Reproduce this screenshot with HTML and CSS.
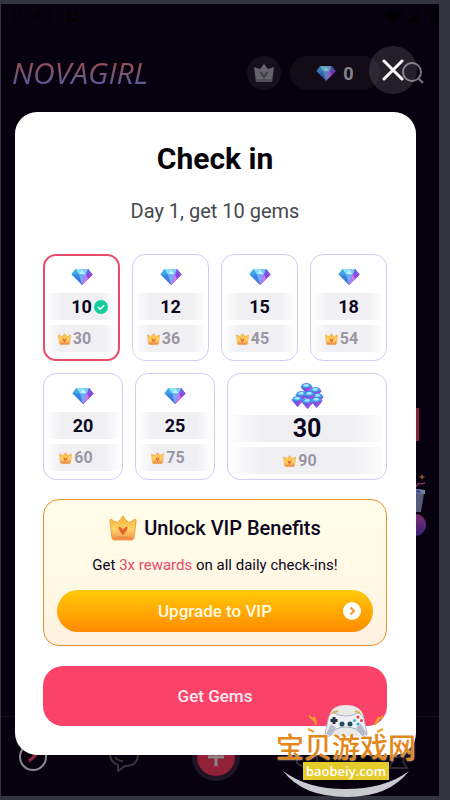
FILE: index.html
```
<!DOCTYPE html>
<html lang="en">
<head>
    <meta charset="UTF-8">
    <meta name="viewport" content="width=device-width, initial-scale=1.0">
    <title>Check in - Novagirl</title>
    <link rel="stylesheet" href="styles.css">
</head>
<body>
    <!-- shared icons -->
    <svg class="sprite" aria-hidden="true">
        <defs>
            <linearGradient id="gem-left" x1="0" y1="0" x2="1" y2="1">
                <stop offset="0" stop-color="#2fa5e8"/>
                <stop offset="1" stop-color="#4b4fd8"/>
            </linearGradient>
            <linearGradient id="gem-right" x1="0" y1="0" x2="1" y2="1">
                <stop offset="0" stop-color="#7fb6ff"/>
                <stop offset="1" stop-color="#8a1fd0"/>
            </linearGradient>
            <linearGradient id="crown-fill" x1="0" y1="0" x2="0" y2="1">
                <stop offset="0" stop-color="#fbb03c"/>
                <stop offset="0.55" stop-color="#fdd566"/>
                <stop offset="1" stop-color="#f09048"/>
            </linearGradient>
        </defs>
        <symbol id="gem" viewBox="0 0 22 17">
            <path d="M4.500 1 H17 L21.500 6.500 L11 17 L0.500 6.500 Z" fill="url(#gem-left)"/>
            <path d="M11 1 H17 L21.500 6.500 L11 17 Z" fill="url(#gem-right)"/>
            <path d="M4.500 1 L8 6.500 H0.500 Z" fill="#3ea9e2"/>
            <path d="M4.500 1 H11 L8 6.500 Z" fill="#86e3fa"/>
            <path d="M11 1 L8 6.500 H15 Z" fill="#b5f3ff"/>
            <path d="M11 1 H17 L15 6.500 Z" fill="#7ccaf5"/>
            <path d="M17 1 L21.500 6.500 H15 Z" fill="#765ade"/>
            <path d="M8 6.500 H15 L11 17 Z" fill="#76a9f5"/>
            <path d="M15 6.500 H21.500 L11 17 Z" fill="#9a3fe0"/>
            <path d="M15 6.500 L17 11 L11 17 Z" fill="#cb7cf2"/>
        </symbol>
        <symbol id="pile-gem" viewBox="0 0 13 11">
            <path d="M0.500 4 L3 1 Q6.500 -0.500 10 1 L12.500 4 L6.500 11 Z" fill="#6a5be0"/>
            <path d="M0.500 4 L3 1 Q6.500 -0.500 10 1 L12.500 4 Q6.500 6 0.500 4 Z" fill="#3f9fec"/>
            <path d="M3 3 L5 1 H8 L9 3 Q6 4.500 3 3 Z" fill="#a4e8ff"/>
            <path d="M7 5 L12.500 4 L6.500 11 Z" fill="#a548de"/>
        </symbol>
        <symbol id="crown" viewBox="0 0 28 26">
            <path d="M2 4 Q5 7 8.500 7.500 Q11.500 5 14 1 Q16.500 5 19.500 7.500 Q23 7 26 4 Q27.500 4 27 6.500 L25 23 Q24.800 25 22.500 25 H5.500 Q3.200 25 3 23 L1 6.500 Q0.500 4 2 4 Z" fill="url(#crown-fill)" stroke="#f2a241" stroke-width="1"/>
            <path d="M4 22 Q14 20.500 24 22 L23.500 24.500 H4.500 Z" fill="#ef8649" opacity="0.7"/>
            <path d="M9.500 12 Q12 11 14 15 Q16 11 18.500 12 Q19 15 14 20 Q9 15 9.500 12 Z" fill="#e9602c"/>
        </symbol>
    </svg>

    <div class="phone">
        <div class="status-bar">
            <span class="clock">10:43</span>
            <span class="status-app">A</span>
            <svg class="status-icons" viewBox="0 0 58 16" aria-hidden="true">
                <path d="M1 5 Q10 -3 20 5 L10.500 15 Z"/>
                <path d="M37 1 V15 H24 Z"/>
                <path d="M48 2 H50 V0 H54 V2 H56 V15 H48 Z"/>
            </svg>
        </div>

        <header class="header">
            <div class="logo">NOVAGIRL</div>
            <button class="vip-badge" aria-label="VIP">
                <svg viewBox="0 0 22 20" width="22" height="20">
                    <path d="M1 4 L7 6 L11 1 L15 6 L21 4 L19 19 H3 Z" fill="#65646a"/>
                    <path d="M3 16 H19 L18.500 19 H3.500 Z" fill="#504f55"/>
                    <path d="M7.500 9 L11 14 L14.500 9" fill="none" stroke="#3c3a42" stroke-width="2"/>
                </svg>
            </button>
            <div class="balance">
                <svg width="20" height="16"><use href="#gem"/></svg>
                <span>0</span>
            </div>
            <button class="search" aria-label="Search">
                <svg viewBox="0 0 22 22" width="22" height="22" fill="none" stroke="#77757d" stroke-width="2">
                    <circle cx="10" cy="10" r="9"/>
                    <path d="M16 16 L21 21"/>
                </svg>
            </button>
            <button class="close" aria-label="Close">
                <svg viewBox="0 0 22 22" width="22" height="22" fill="none" stroke="#fff" stroke-width="3" stroke-linecap="round">
                    <path d="M2 2 L20 20 M20 2 L2 20"/>
                </svg>
            </button>
        </header>

        <!-- what shows of the feed beside the dialog -->
        <div class="feed-tag"></div>
        <svg class="feed-gift" viewBox="0 0 16 66" aria-hidden="true">
            <defs>
                <linearGradient id="ball" x1="0" y1="0" x2="0" y2="1">
                    <stop offset="0" stop-color="#7c2f72"/>
                    <stop offset="1" stop-color="#38217a"/>
                </linearGradient>
            </defs>
            <circle cx="5" cy="52" r="11" fill="url(#ball)"/>
            <path d="M0 19 L14 20 L11 39 H0 Z" fill="#555a78"/>
            <path d="M0 15 L15 17 V21 L0 20 Z" fill="#767d99"/>
            <path d="M5 19 Q9 15 11 20 Z" fill="#263f91"/>
            <path d="M6 14 Q8 9 11 11 L15 10" fill="none" stroke="#7b3559" stroke-width="1.500"/>
            <path d="M12 1 L13 3 L15 4 L13 5 L12 7 L11 5 L9 4 L11 3 Z" fill="#8b562f"/>
        </svg>

        <main class="dialog">
            <h1>Check in</h1>
            <p class="subtitle">Day 1, get 10 gems</p>

            <div class="days">
                <div class="day selected">
                    <svg class="gem"><use href="#gem"/></svg>
                    <div class="amount">10
                        <svg class="tick" viewBox="0 0 14 14">
                            <circle cx="7" cy="7" r="7" fill="#14ce9b"/>
                            <path d="M4 7 L6.200 9.200 L10.200 5.200" fill="none" stroke="#fff" stroke-width="1.500"/>
                        </svg>
                    </div>
                    <div class="vip-amount"><svg class="crown"><use href="#crown"/></svg>30</div>
                </div>
                <div class="day">
                    <svg class="gem"><use href="#gem"/></svg>
                    <div class="amount">12</div>
                    <div class="vip-amount"><svg class="crown"><use href="#crown"/></svg>36</div>
                </div>
                <div class="day">
                    <svg class="gem"><use href="#gem"/></svg>
                    <div class="amount">15</div>
                    <div class="vip-amount"><svg class="crown"><use href="#crown"/></svg>45</div>
                </div>
                <div class="day">
                    <svg class="gem"><use href="#gem"/></svg>
                    <div class="amount">18</div>
                    <div class="vip-amount"><svg class="crown"><use href="#crown"/></svg>54</div>
                </div>
            </div>

            <div class="days last-days">
                <div class="day">
                    <svg class="gem"><use href="#gem"/></svg>
                    <div class="amount">20</div>
                    <div class="vip-amount"><svg class="crown"><use href="#crown"/></svg>60</div>
                </div>
                <div class="day">
                    <svg class="gem"><use href="#gem"/></svg>
                    <div class="amount">25</div>
                    <div class="vip-amount"><svg class="crown"><use href="#crown"/></svg>75</div>
                </div>
                <div class="day big">
                    <svg class="gem-pile" viewBox="0 0 33 26">
                        <use href="#pile-gem" x="9" y="0" width="13" height="11"/>
                        <use href="#pile-gem" x="18" y="4" width="13" height="11"/>
                        <use href="#pile-gem" x="4" y="8" width="13" height="11"/>
                        <use href="#pile-gem" x="20" y="10" width="13" height="11"/>
                        <use href="#pile-gem" x="12" y="8" width="13" height="11"/>
                        <use href="#pile-gem" x="0" y="13" width="13" height="11"/>
                        <use href="#pile-gem" x="19" y="14" width="13" height="11"/>
                        <use href="#pile-gem" x="10" y="15" width="13" height="11"/>
                    </svg>
                    <div class="amount">30</div>
                    <div class="vip-amount"><svg class="crown"><use href="#crown"/></svg>90</div>
                </div>
            </div>

            <section class="vip">
                <h2><svg width="28" height="26"><use href="#crown"/></svg>Unlock VIP Benefits</h2>
                <p>Get <span>3x rewards</span> on all daily check-ins!</p>
                <button class="upgrade">Upgrade to VIP
                    <svg class="arrow" viewBox="0 0 18 18">
                        <circle cx="9" cy="9" r="9" fill="#fff"/>
                        <path d="M7.500 5.500 L11 9 L7.500 12.500" fill="none" stroke="#f39a2a" stroke-width="2"/>
                    </svg>
                </button>
            </section>

            <button class="get-gems">Get Gems</button>
        </main>

        <nav class="tabs">
            <a href="#" aria-label="Discover">
                <svg viewBox="0 0 28 28" width="28" height="28" fill="none">
                    <circle cx="14" cy="14" r="13" stroke="#8a888f" stroke-width="2"/>
                    <path d="M10 18 L17 12" stroke="#8f2740" stroke-width="3"/>
                </svg>
            </a>
            <a href="#" aria-label="Chats">
                <svg viewBox="0 0 30 30" width="30" height="30" fill="none" stroke="#37343d" stroke-width="2">
                    <path d="M1 12 Q1 3 15 3 Q29 3 29 12 Q29 24 16 24 L9 29 V23 Q1 20 1 12 Z"/>
                    <path d="M6 15 Q9 19 14 19"/>
                </svg>
            </a>
            <a href="#" aria-label="Create">
                <svg viewBox="0 0 48 48" width="48" height="48">
                    <circle cx="24" cy="24" r="24" fill="#211426"/>
                    <circle cx="24" cy="24" r="19" fill="#8f2138"/>
                    <path d="M24 15 V33 M16 24 H32" stroke="#8d8087" stroke-width="3"/>
                </svg>
            </a>
            <a href="#" aria-label="Gallery">
                <svg viewBox="0 0 28 28" width="28" height="28" fill="none" stroke="#2c2932" stroke-width="2">
                    <path d="M4 4 H24 V20 L14 27 L4 20 Z"/>
                </svg>
            </a>
            <a href="#" aria-label="Profile">
                <svg viewBox="0 0 28 28" width="28" height="28" fill="none" stroke="#2c2932" stroke-width="2">
                    <circle cx="14" cy="8" r="6"/>
                    <path d="M8 14 L9 18 L5 25 H23 L19 18 L20 14"/>
                </svg>
            </a>
        </nav>
    </div>

    <div class="site-mark" lang="zh">
        <svg class="pad" viewBox="0 0 76 38" aria-hidden="true">
            <path d="M21 12 Q23 0 38 0 Q53 0 56 12 L58 31 H19 Z" fill="#e9e9e9"/>
            <path d="M26 8 Q21 8 20 15 L17 29 Q18 34 23 30 L28 24 Q38 20 48 24 L54 30 Q59 34 59 28 L56 14 Q54 8 49 8 Q45 11 38 11 Q31 11 26 8 Z" fill="#eef0f4" stroke="#aeb1bf" stroke-width="1"/>
            <path d="M18 29 L23 19 L28 23 L22 31 Z M53 19 L59 29 L55 31 L48 23 Z" fill="#b6bbca"/>
            <path d="M24 8 L30 6 M47 6 L52 8" stroke="#e5b34a" stroke-width="2"/>
            <path d="M26 12 V19 M22.500 15.500 H29.500" stroke="#243345" stroke-width="3"/>
            <circle cx="34" cy="19" r="2.500" fill="#244e5c"/>
            <circle cx="42" cy="19" r="2.500" fill="#244e5c"/>
            <circle cx="50" cy="12" r="1.500" fill="#e04848"/>
            <circle cx="50" cy="19" r="1.500" fill="#3aa0dd"/>
            <circle cx="46.500" cy="15.500" r="1.500" fill="#48acd8"/>
            <circle cx="53.500" cy="15.500" r="1.500" fill="#e04848"/>
            <path d="M1 11 L8 17 L6 12 L8 20 M0 24 L6 27 M75 11 L68 17 L71 12 L67 20 M75 24 L69 27" fill="none" stroke="#eda22c" stroke-width="2"/>
        </svg>
        <div class="mark-name">宝贝游戏网</div>
        <div class="mark-url">baobeiy.com</div>
        <svg class="swoosh" viewBox="0 0 126 26" aria-hidden="true">
            <path d="M0 0 Q24 18 62 18 Q102 18 126 0 Q106 26 64 26 Q20 26 0 0 Z" fill="#c9c9d1"/>
        </svg>
    </div>
</body>
</html>
```

FILE: styles.css
```
* {
    box-sizing: border-box;
}
body {
    margin: 0;
    padding: 4px 11px 4px 1px;
    background-color: #32353f;
    font-family: Roboto, sans-serif;
    color: #0c0620;
}
h1, h2, p {
    margin: 0;
}
button {
    border: none;
    padding: 0;
    font-family: inherit;
    cursor: pointer;
}
svg {
    display: block;
    flex-shrink: 0;
}
.sprite {
    position: absolute;
    width: 0;
    height: 0;
}
.phone {
    position: relative;
    min-height: calc(100vh - 8px);
    background-color: #07000f;
    overflow: hidden;
}

/* top of the app */
.status-bar {
    display: flex;
    align-items: center;
    height: 24px;
    padding: 0 6px 0 8px;
    color: #010003;
    font-size: 17px;
}
.status-app {
    margin-left: 16px;
    width: 12px;
    font-size: 10px;
    line-height: 12px;
    text-align: center;
    background-color: #010003;
    color: #0b0613;
}
.status-icons {
    width: 58px;
    height: 16px;
    margin-left: auto;
    margin-right: -8px;
    fill: #010003;
}
.header {
    position: relative;
    display: flex;
    align-items: center;
    height: 72px;
    margin-bottom: 12px;
    padding: 18px 15px 0 11px;
}
.logo {
    margin-right: auto;
    font-family: "Open Sans", sans-serif;
    font-style: italic;
    font-size: 30px;
    line-height: 40px;
    background: linear-gradient(#94505a 30%, #5c5c94 75%);
    background-clip: text;
    -webkit-background-clip: text;
    color: transparent;
}
.vip-badge {
    display: flex;
    align-items: center;
    justify-content: center;
    width: 34px;
    height: 34px;
    border-radius: 50%;
    background-color: #15101c;
}
.balance {
    display: flex;
    align-items: center;
    justify-content: center;
    gap: 7px;
    width: 90px;
    height: 34px;
    margin-left: 9px;
    border-radius: 17px;
    background-color: #110c18;
    color: #85838a;
    font-size: 18px;
    font-weight: 700;
}
.balance svg {
    opacity: 0.75;
}
.search {
    margin-left: 22px;
    background: none;
}
.close {
    position: absolute;
    right: 22px;
    top: 18px;
    display: flex;
    align-items: center;
    justify-content: center;
    width: 48px;
    height: 48px;
    border-radius: 50%;
    background-color: rgba(255, 255, 255, 0.12);
}
.feed-tag {
    position: absolute;
    right: 20px;
    top: 404px;
    width: 12px;
    height: 33px;
    background-color: #84213a;
}
.feed-gift {
    position: absolute;
    right: 13px;
    top: 469px;
    width: 16px;
    height: 66px;
}

/* dialog */
.dialog {
    position: relative;
    z-index: 1;
    margin: 0 23px 41px 14px;
    padding: 30px 29px 29px 28px;
    border-radius: 22px;
    background-color: #fff;
    text-align: center;
}
h1 {
    font-size: 30px;
    line-height: 34px;
    font-weight: 700;
    color: #050308;
}
.subtitle {
    margin: 20px 0 28px;
    font-size: 20px;
    line-height: 30px;
    color: #47494f;
}
.days {
    display: grid;
    grid-template-columns: repeat(4, 1fr);
    gap: 12px;
}
.last-days {
    grid-template-columns: 1fr 1fr 2fr;
    margin-top: 12px;
}
.day {
    display: flex;
    flex-direction: column;
    align-items: center;
    justify-content: flex-end;
    gap: 5px;
    height: 107px;
    padding: 0 4px 8px;
    border: 1px solid #cfcdf7;
    border-radius: 13px;
}
.day.selected {
    padding: 0 3px 7px;
    border: 2px solid #e94a6c;
}
.day.big {
    padding-bottom: 5px;
}
.gem {
    width: 22px;
    height: 17px;
    margin-bottom: 3px;
}
.gem-pile {
    width: 33px;
    height: 26px;
    margin-bottom: 1px;
}
.amount,
.vip-amount {
    display: flex;
    align-items: center;
    justify-content: center;
    width: 100%;
    height: 27px;
    background: linear-gradient(90deg, #fcfcfd, #f0f0f3 20%, #f0f0f3 80%, #fcfcfd);
    font-size: 18px;
    font-weight: 700;
}
.amount {
    position: relative;
}
.big .amount {
    font-size: 25px;
}
.tick {
    position: absolute;
    right: 7px;
    width: 14px;
    height: 14px;
}
.vip-amount {
    gap: 2px;
    padding-right: 14px;
    font-size: 16px;
    color: #9b96a5;
}
.crown {
    width: 13px;
    height: 12px;
}
.vip {
    margin-top: 19px;
    padding: 14px 13px 13px;
    border: 1px solid #e8922f;
    border-radius: 16px;
    background: linear-gradient(#fffde9, #fff8e4 60%, #fff1e0);
}
h2 {
    display: flex;
    align-items: center;
    justify-content: center;
    gap: 7px;
    font-size: 20px;
    line-height: 28px;
    font-weight: 500;
}
.vip p {
    margin: 13px 0 15px;
    font-size: 15px;
    line-height: 20px;
}
.vip p span {
    color: #e94a6c;
}
.upgrade {
    position: relative;
    display: block;
    width: 100%;
    height: 42px;
    border-radius: 21px;
    background: linear-gradient(#ffca08, #ff8a00);
    color: #fffbe0;
    font-size: 17px;
    font-weight: 500;
}
.arrow {
    position: absolute;
    right: 12px;
    top: 12px;
    width: 18px;
    height: 18px;
}
.get-gems {
    display: block;
    width: 100%;
    height: 60px;
    margin-top: 20px;
    border-radius: 20px;
    background-color: #fb4269;
    color: #ffe9ef;
    font-size: 17px;
    font-weight: 500;
}

/* bottom tabs */
.tabs {
    position: absolute;
    left: 0;
    right: 0;
    bottom: 0;
    display: flex;
    align-items: center;
    justify-content: space-between;
    height: 80px;
    padding: 0 17px 0 8px;
    border-top: 1px solid #15101c;
}
.tabs a {
    display: flex;
    justify-content: center;
    width: 48px;
}

/* site mark */
.site-mark {
    position: absolute;
    z-index: 2;
    right: 33px;
    bottom: 3px;
    width: 142px;
    text-align: center;
}
.pad {
    width: 76px;
    height: 38px;
    margin: 0 auto -13px;
}
.mark-name {
    position: relative;
    font-family: "Noto Sans CJK SC", sans-serif;
    font-size: 28px;
    line-height: 32px;
    font-weight: 500;
    white-space: nowrap;
    color: #e4871b;
    text-shadow: 0 0 2px #fff;
}
.mark-url {
    width: 86px;
    margin: 0 auto;
    background-color: #e5cb2c;
    color: #fff;
    font-family: "Open Sans", sans-serif;
    font-size: 13px;
    line-height: 18px;
    font-weight: 600;
}
.swoosh {
    width: 126px;
    height: 26px;
    margin: -9px auto 0;
}
```
